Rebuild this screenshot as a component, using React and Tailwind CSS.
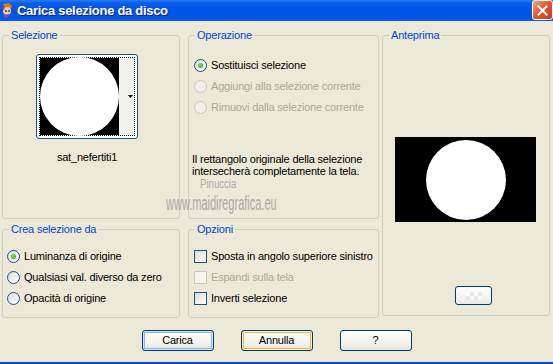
import React from 'react';

const font = { fontFamily: '"Liberation Sans", Arial, sans-serif' };
const narrow = { fontFamily: '"Liberation Sans", Arial, sans-serif' };

function Group({ title, className, children }) {
    return (
        <fieldset className={`border border-[#D0D0BF] rounded-[3px] min-w-0 ${className}`}>
            <legend className="ml-[6px] px-[2px] text-[#0046D5] leading-[13px]">{title}</legend>
            {children}
        </fieldset>
    );
}

function Radio({ checked, disabled, label }) {
    return (
        <div className="h-[21px] flex items-center gap-[4px] whitespace-nowrap">
            <span
                className={`w-[13px] h-[13px] shrink-0 rounded-full border flex items-center justify-center ${
                    disabled
                        ? 'border-[#CAC8BB] bg-[#F2F1E9]'
                        : 'border-[#1C5180] bg-[linear-gradient(135deg,#DCDBD5,#FFFFFF)]'
                }`}
            >
                {checked && (
                    <span className="w-[5px] h-[5px] rounded-full bg-[radial-gradient(circle_at_40%_40%,#6FE36F,#219A21)]" />
                )}
            </span>
            <span className={disabled ? 'text-[#ACA899]' : 'text-black'}>{label}</span>
        </div>
    );
}

function Check({ disabled, label }) {
    return (
        <div className="h-[21px] flex items-center gap-[4px] whitespace-nowrap">
            <span
                className={`w-[13px] h-[13px] shrink-0 border ${
                    disabled
                        ? 'border-[#CAC8BB] bg-[#F6F5EE]'
                        : 'border-[#1C5180] bg-[linear-gradient(135deg,#DCDBD5,#FFFFFF)]'
                }`}
            />
            <span className={disabled ? 'text-[#ACA899]' : 'text-black'}>{label}</span>
        </div>
    );
}

function XPButton({ children, variant }) {
    const ring =
        variant === 'default'
            ? 'shadow-[inset_0_0_0_1px_#CEE7FF,inset_0_0_0_2px_#8CB4F2]'
            : variant === 'focus'
            ? 'shadow-[inset_0_0_0_1px_#FFF0CF,inset_0_0_0_2px_#F5B33C]'
            : '';
    return (
        <button
            className={`w-[72px] h-[21px] rounded-[3px] border border-[#003C74] bg-[linear-gradient(180deg,#FFFFFF_0%,#F4F3EE_60%,#E6E3DA_100%)] text-[11px] text-black leading-none ${ring}`}
        >
            {children}
        </button>
    );
}

function TitleIcon() {
    return (
        <svg width="14" height="15" viewBox="0 0 14 15">
            <path d="M3 1 L9 0 L12 3 L11 6 L5 5 Z" fill="#E8702A" />
            <circle cx="7" cy="8" r="4" fill="#F5C9A0" />
            <path d="M2 4 L5 3 L4 8 Z" fill="#C84A1A" />
            <rect x="5" y="7" width="2" height="2" fill="#2E8B2E" />
            <rect x="8" y="7" width="2" height="2" fill="#2E8B2E" />
            <path d="M3 12 L10 11 L8 15 L4 15 Z" fill="#6A4BC8" />
        </svg>
    );
}

export default function App() {
    return (
        <div className="w-[553px] h-[364px] flex flex-col bg-[#ECE9D8] text-[11px] tracking-[-0.2px] overflow-hidden" style={font}>
            {/* Title bar */}
            <div className="h-[21px] flex items-center justify-between bg-[linear-gradient(180deg,#2A7BF5_0%,#0A5DEB_15%,#0054E3_45%,#0055E8_80%,#0A5BE8_100%)]">
                <div className="flex items-center gap-[3px]">
                    <TitleIcon />
                    <span className="text-white font-bold text-[13px] tracking-[-0.3px] [text-shadow:1px_1px_0_#0A1E8C]">
                        Carica selezione da disco
                    </span>
                </div>
                <div className="w-[21px] h-[20px] self-start rounded-[3px] border border-white bg-[linear-gradient(135deg,#F0A68E,#E35A33_45%,#C63A1A)] flex items-center justify-center">
                    <svg width="11" height="11" viewBox="0 0 11 11">
                        <path d="M1.5 1.5 L9.5 9.5 M9.5 1.5 L1.5 9.5" stroke="white" strokeWidth="2" strokeLinecap="square" />
                    </svg>
                </div>
            </div>

            {/* Body */}
            <div className="relative flex-1 flex flex-col pt-[8px] pl-[2px]">
                <div className="flex items-start">
                    {/* Left column */}
                    <div className="w-[178px] flex flex-col gap-[4px]">
                        <Group title="Selezione" className="h-[190px]">
                            <div className="ml-[33px] mt-[12px] w-[102px] h-[85px] rounded-[3px] border border-[#1C5180] bg-white p-[2px]">
                                <div className="w-full h-full border border-dotted border-black flex">
                                    <div className="w-[79px] h-full bg-black flex items-center justify-center">
                                        <div className="w-[79px] h-[79px] rounded-full bg-white" />
                                    </div>
                                    <div className="flex-1 bg-[#F1F1EE] flex items-center justify-end pr-[1px]">
                                        <svg width="5" height="3" viewBox="0 0 5 3">
                                            <path d="M0 0 H5 L2.5 3 Z" fill="black" />
                                        </svg>
                                    </div>
                                </div>
                            </div>
                            <div className="mt-[12px] w-[168px] text-center leading-[13px]">sat_nefertiti1</div>
                        </Group>
                        <Group title="Crea selezione da" className="h-[95px]">
                            <div className="pt-[10px] pl-[4px]">
                                <Radio checked label="Luminanza di origine" />
                                <Radio label="Qualsiasi val. diverso da zero" />
                                <Radio label="Opacità di origine" />
                            </div>
                        </Group>
                    </div>

                    {/* Middle column */}
                    <div className="w-[191px] ml-[8px] flex flex-col gap-[4px]">
                        <Group title="Operazione" className="h-[190px]">
                            <div className="pt-[13px] pl-[5px]">
                                <Radio checked label="Sostituisci selezione" />
                                <Radio disabled label="Aggiungi alla selezione corrente" />
                                <Radio disabled label="Rimuovi dalla selezione corrente" />
                            </div>
                            <p className="mt-[35px] pl-[3px] leading-[12px] whitespace-nowrap">
                                Il rettangolo originale della selezione
                                <br />
                                intersecherà completamente la tela.
                            </p>
                        </Group>
                        <Group title="Opzioni" className="h-[95px]">
                            <div className="pt-[10px] pl-[5px]">
                                <Check label="Sposta in angolo superiore sinistro" />
                                <Check disabled label="Espandi sulla tela" />
                                <Check label="Inverti selezione" />
                            </div>
                        </Group>
                    </div>

                    {/* Right column */}
                    <Group title="Anteprima" className="w-[168px] h-[287px] ml-[3px]">
                        <div className="ml-[12px] mt-[95px] w-[141px] h-[85px] bg-black flex items-center justify-center">
                            <div className="w-[80px] h-[80px] rounded-full bg-white" />
                        </div>
                        <div className="ml-[72px] mt-[64px] w-[37px] h-[19px] rounded-[3px] border border-[#003C74] bg-[linear-gradient(180deg,#FFFFFF,#ECEAE3)] flex items-center justify-center">
                            <div className="grid grid-cols-4 w-[16px] h-[8px] opacity-60">
                                <span className="bg-white" /><span className="bg-[#E0E0E0]" /><span className="bg-white" /><span className="bg-[#E0E0E0]" />
                                <span className="bg-[#E0E0E0]" /><span className="bg-white" /><span className="bg-[#E0E0E0]" /><span className="bg-white" />
                            </div>
                        </div>
                    </Group>
                </div>

                {/* Buttons */}
                <div className="mt-[12px] flex justify-center gap-[27px] pr-[2px]">
                    <XPButton variant="default">Carica</XPButton>
                    <XPButton variant="focus">Annulla</XPButton>
                    <XPButton>?</XPButton>
                </div>

                {/* Watermark */}
                <div className="absolute left-[200px] top-[154px] text-[#9C9C9C] text-[12px] tracking-normal opacity-80 origin-left scale-x-[0.8] pointer-events-none" style={narrow}>
                    Pinuccia
                </div>
                <div className="absolute left-[166px] top-[167px] text-[#9A9A9A] text-[20px] tracking-normal opacity-80 origin-left scale-x-[0.55] pointer-events-none" style={narrow}>
                    www.maidiregrafica.eu
                </div>
            </div>

            <div className="h-[2px] bg-[#0B47D9]" />
        </div>
    );
}
